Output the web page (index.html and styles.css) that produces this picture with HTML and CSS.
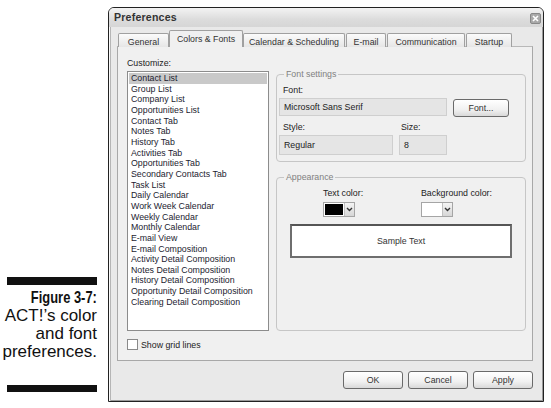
FILE: index.html
```html
<!DOCTYPE html>
<html>

<head>
    <link rel="stylesheet" href="styles.css">
</head>

<body>
    <div class="Caption">
        <div class="Bar"></div>
        <div class="CaptionText">
            <b class="Fig">Figure 3-7:</b><br>
            ACT!’s color<br>
            and font<br>
            preferences.
        </div>
        <div class="Bar Bottom"></div>
    </div>
    <div class="Dialog">
        <div class="TitleBar">
            <span class="Title">Preferences</span>
            <span class="Close">
                <svg width="9" height="9" viewBox="0 0 9 9">
                    <path d="M2 2 L7 7 M7 2 L2 7" stroke="#fff" stroke-width="1.6" fill="none" />
                </svg>
            </span>
        </div>
        <div class="Body">
            <div class="Tabs">
                <div class="Tab">General</div>
                <div class="Tab Active">Colors &amp; Fonts</div>
                <div class="Tab">Calendar &amp; Scheduling</div>
                <div class="Tab">E-mail</div>
                <div class="Tab">Communication</div>
                <div class="Tab">Startup</div>
            </div>
            <div class="Panel">
                <div class="Main">
                    <div class="LeftCol">
                        <div class="Label">Customize:</div>
                        <div class="List">
                            <div class="Item Sel">Contact List</div>
                            <div class="Item">Group List</div>
                            <div class="Item">Company List</div>
                            <div class="Item">Opportunities List</div>
                            <div class="Item">Contact Tab</div>
                            <div class="Item">Notes Tab</div>
                            <div class="Item">History Tab</div>
                            <div class="Item">Activities Tab</div>
                            <div class="Item">Opportunities Tab</div>
                            <div class="Item">Secondary Contacts Tab</div>
                            <div class="Item">Task List</div>
                            <div class="Item">Daily Calendar</div>
                            <div class="Item">Work Week Calendar</div>
                            <div class="Item">Weekly Calendar</div>
                            <div class="Item">Monthly Calendar</div>
                            <div class="Item">E-mail View</div>
                            <div class="Item">E-mail Composition</div>
                            <div class="Item">Activity Detail Composition</div>
                            <div class="Item">Notes Detail Composition</div>
                            <div class="Item">History Detail Composition</div>
                            <div class="Item">Opportunity Detail Composition</div>
                            <div class="Item">Clearing Detail Composition</div>
                        </div>
                    </div>
                    <div class="RightCol">
                        <fieldset class="Group FontGroup">
                            <legend>Font settings</legend>
                            <div class="FieldLabel">Font:</div>
                            <div class="Row">
                                <div class="Field FontName">Microsoft Sans Serif</div>
                                <div class="Button FontBtn">Font...</div>
                            </div>
                            <div class="Row">
                                <div class="StyleCol">
                                    <div class="FieldLabel">Style:</div>
                                    <div class="Field Tall">Regular</div>
                                </div>
                                <div class="SizeCol">
                                    <div class="FieldLabel Near">Size:</div>
                                    <div class="Field Tall">8</div>
                                </div>
                            </div>
                        </fieldset>
                        <fieldset class="Group Appearance">
                            <legend>Appearance</legend>
                            <div class="Colors">
                                <div class="ColorCol">
                                    <div class="ColorLabel">Text color:</div>
                                    <div class="Picker">
                                        <span class="Swatch Black"></span>
                                        <span class="Drop">
                                            <svg width="7" height="5" viewBox="0 0 7 5">
                                                <path d="M1 1 L3.5 3.5 L6 1" stroke="#333" stroke-width="1.4" fill="none" />
                                            </svg>
                                        </span>
                                    </div>
                                </div>
                                <div class="ColorCol">
                                    <div class="ColorLabel">Background color:</div>
                                    <div class="Picker">
                                        <span class="Swatch White"></span>
                                        <span class="Drop">
                                            <svg width="7" height="5" viewBox="0 0 7 5">
                                                <path d="M1 1 L3.5 3.5 L6 1" stroke="#333" stroke-width="1.4" fill="none" />
                                            </svg>
                                        </span>
                                    </div>
                                </div>
                            </div>
                            <div class="Sample">Sample Text</div>
                        </fieldset>
                    </div>
                </div>
                <div class="Check"><span class="CheckBox"></span>Show grid lines</div>
            </div>
            <div class="Buttons">
                <div class="Button">OK</div>
                <div class="Button">Cancel</div>
                <div class="Button">Apply</div>
            </div>
        </div>
    </div>
</body>

</html>
```

FILE: styles.css
```css
* {
    box-sizing: border-box;
}

body {
    margin: 0;
    width: 551px;
    height: 408px;
    display: flex;
    background-color: white;
    font-family: "Liberation Sans", Arial, sans-serif;
    overflow: hidden;
}

.Caption {
    width: 97px;
    display: flex;
    flex-direction: column;
    align-items: flex-end;
    justify-content: flex-end;
    padding-bottom: 16px;
}

.Caption .Bar {
    width: 90px;
    height: 8px;
    background-color: #111;
}

.Caption .Bar.Bottom {
    height: 7px;
}

.CaptionText {
    margin: 4px 0 24px 0;
    text-align: right;
    font-size: 17px;
    line-height: 18px;
    color: #111;
}

.CaptionText .Fig {
    display: inline-block;
    transform: scaleX(0.76);
    transform-origin: right;
}

.Dialog {
    margin: 7px 0 0 11px;
    width: 436px;
    height: 395px;
    border: 1px solid #222;
    border-radius: 6px 6px 0 0;
    background-color: #e9e9e9;
    box-shadow: inset 1px 0 0 #fafafa, inset 2px 0 0 #b5b5b5, inset -1px -1px 0 #9a9a9a;
    font-size: 8.8px;
    color: #222;
}

.TitleBar {
    height: 19px;
    display: flex;
    align-items: center;
    justify-content: space-between;
    padding: 0 2px 1px 5px;
    border-radius: 5px 5px 0 0;
    background: linear-gradient(#f3f3f3, #dcdcdc 60%, #d6d6d6);
}

.Title {
    font-weight: bold;
    font-size: 10.6px;
    letter-spacing: 0.2px;
    color: #333;
}

.Close {
    width: 11px;
    height: 11px;
    margin-top: 2px;
    border: 1px solid #888;
    border-radius: 2px;
    background-color: #a9a9a9;
    display: flex;
    align-items: center;
    justify-content: center;
}

.Body {
    padding: 4px 10px 0 8px;
}

.Tabs {
    display: flex;
    align-items: flex-end;
    height: 16px;
    padding-left: 1px;
    margin-bottom: -1px;
}

.Tab {
    height: 14px;
    margin-right: 1px;
    border: 1px solid #a0a0a0;
    border-bottom: none;
    border-radius: 2px 2px 0 0;
    background: linear-gradient(#fbfbfb, #e6e6e6);
    text-align: center;
    line-height: 14px;
    padding-top: 1px;
    color: #333;
}

.Tab:nth-child(1) { width: 51px; }
.Tab:nth-child(2) { width: 74px; }
.Tab:nth-child(3) { width: 102px; }
.Tab:nth-child(4) { width: 40px; }
.Tab:nth-child(5) { width: 78px; }
.Tab:nth-child(6) { width: 46px; }

.Tab.Active {
    position: relative;
    z-index: 1;
    height: 17px;
    margin-left: -1px;
    margin-right: 0;
    background: #f0f0f0;
    line-height: 14px;
}

.Panel {
    height: 315px;
    border: 1px solid #a8a8a8;
    border-top-color: #b8b8b8;
    background-color: #f0f0f0;
    padding: 11px 6px 0 9px;
}

.Main {
    display: flex;
    gap: 7px;
}

.Label {
    height: 11px;
    line-height: 11px;
    margin-bottom: 2px;
}

.List {
    width: 142px;
    height: 260px;
    border: 1px solid #8c8c8c;
    background-color: white;
    padding: 1px;
    color: #1c1c30;
}

.Item {
    height: 10.67px;
    line-height: 10.67px;
    padding-left: 2px;
    white-space: nowrap;
}

.Item.Sel {
    background-color: #c9c9c9;
}

.RightCol {
    flex: 1;
    margin-top: 11px;
    display: flex;
    flex-direction: column;
}

.Group {
    margin: 0;
    width: 250px;
    border: 1px solid #c6c6c6;
    border-radius: 4px;
    padding: 5px 2px 6px 2px;
}

.Group legend {
    margin-left: 5px;
    padding: 0 2px;
    line-height: 11px;
    color: #808080;
}

.FieldLabel {
    height: 11px;
    line-height: 11px;
    padding-left: 4px;
    margin-bottom: 2px;
}

.FieldLabel.Near {
    padding-left: 2px;
}

.Row {
    display: flex;
    gap: 6px;
    align-items: flex-start;
}

.Row + .Row {
    margin-top: 5px;
}

.Field {
    height: 18px;
    border: 1px solid #cfcfcf;
    background-color: #e5e5e5;
    padding-left: 4px;
    line-height: 17px;
}

.Field.Tall {
    height: 20px;
    line-height: 19px;
}

.FontName {
    width: 168px;
}

.StyleCol .Field {
    width: 114px;
}

.SizeCol .Field {
    width: 48px;
}

.Button {
    width: 60px;
    height: 18px;
    border: 1px solid #6a6a6a;
    border-radius: 3px;
    background: linear-gradient(#ffffff, #f1f1f1 60%, #d9d9d9);
    text-align: center;
    line-height: 16px;
    color: #333;
}

.FontBtn {
    width: 56px;
    margin-top: 1px;
}

.Appearance {
    flex: 1;
    margin-top: 10px;
    padding-top: 5px;
}

.Colors {
    display: flex;
    padding-left: 44px;
}

.ColorCol {
    width: 98px;
}

.ColorLabel {
    height: 11px;
    line-height: 11px;
    margin-bottom: 3px;
}

.Picker {
    display: flex;
    width: 32px;
    height: 15px;
    border: 1px solid #a5a5a5;
    background-color: white;
}

.Swatch {
    width: 18px;
    margin: 1px;
}

.Swatch.Black {
    background-color: #000;
}

.Swatch.White {
    background-color: #fff;
}

.Drop {
    flex: 1;
    background: linear-gradient(#f4f4f4, #d6d6d6);
    border-left: 1px solid #c0c0c0;
    display: flex;
    align-items: center;
    justify-content: center;
}

.Sample {
    margin: 7px 0 0 11px;
    width: 222px;
    height: 34px;
    border: 2px solid #6e6e6e;
    border-top-color: #555;
    background-color: white;
    text-align: center;
    line-height: 30px;
    color: #333;
}

.Check {
    display: flex;
    align-items: center;
    margin-top: 8px;
    height: 11px;
}

.CheckBox {
    width: 11px;
    height: 11px;
    border: 1px solid #8a8a8a;
    background-color: white;
    margin-right: 3px;
}

.Buttons {
    display: flex;
    justify-content: flex-end;
    gap: 5px;
    margin-top: 10px;
}
```
